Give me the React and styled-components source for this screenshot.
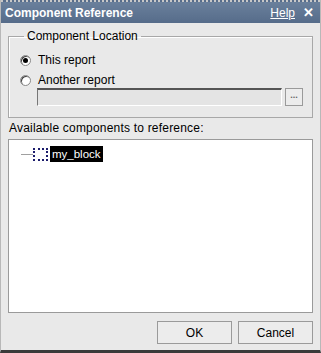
import * as React from 'react';
import styled, { createGlobalStyle } from 'styled-components';

const Global = createGlobalStyle`
    html, body {
        margin: 0;
        padding: 0;
        background: #e9e9e9;
    }
    body {
        font-family: "Liberation Sans", Arial, sans-serif;
        font-size: 12px;
        color: #000;
    }
`;

export default function App() {
    return (
        <Window>
            <Global />
            <TitleBar>
                <Title>Component Reference</Title>
                <HelpLink>Help</HelpLink>
                <Close>✕</Close>
            </TitleBar>
            <Body>
                <Group>
                    <Legend>Component Location</Legend>
                    <RadioRow>
                        <Radio checked />
                        <span>This report</span>
                    </RadioRow>
                    <RadioRow>
                        <Radio />
                        <span>Another report</span>
                    </RadioRow>
                    <PathRow>
                        <PathInput />
                        <BrowseButton>...</BrowseButton>
                    </PathRow>
                </Group>
                <ListLabel>Available components to reference:</ListLabel>
                <Tree>
                    <TreeItem>
                        <Branch />
                        <FocusBox />
                        <Selected>my_block</Selected>
                    </TreeItem>
                </Tree>
                <Footer>
                    <Button>OK</Button>
                    <Button>Cancel</Button>
                </Footer>
            </Body>
        </Window>
    );
}

const Window = styled.div`
    width: 321px;
    height: 353px;
    box-sizing: border-box;
    display: flex;
    flex-direction: column;
    background: #e9e9e9;
    border-left: 1px solid #b8b8b8;
    border-right: 1px solid #b8b8b8;
    border-bottom: 3px solid #3a3a3a;
    overflow: hidden;
`;

const TitleBar = styled.div`
    height: 21px;
    display: flex;
    align-items: center;
    padding: 0 6px 0 4px;
    border-top: 2px dotted #c8c8c8;
    background: linear-gradient(#6a809c, #566c8a);
    color: #fff;
`;

const Title = styled.div`
    flex: 1;
    font-weight: bold;
    font-size: 12px;
`;

const HelpLink = styled.span`
    text-decoration: underline;
    font-size: 12px;
    margin-right: 8px;
`;

const Close = styled.span`
    font-size: 13px;
    font-weight: bold;
`;

const Body = styled.div`
    flex: 1;
    display: flex;
    flex-direction: column;
    padding: 6px 7px 6px 7px;
`;

const Group = styled.fieldset`
    margin: 0;
    padding: 10px 9px 11px 11px;
    border: 1px solid #a8a8a8;
    box-shadow: inset 1px 1px 0 #fff;
    display: flex;
    flex-direction: column;
    gap: 6px;
`;

const Legend = styled.legend`
    padding: 0 3px;
    margin-left: 4px;
    font-size: 12px;
`;

const RadioRow = styled.label`
    display: flex;
    align-items: center;
    gap: 7px;
    height: 14px;
`;

const Radio = styled.span`
    width: 9px;
    height: 9px;
    border-radius: 50%;
    background: #fff;
    border: 1px solid #888;
    box-shadow: inset 1px 1px 0 #444;
    position: relative;
    &::after {
        content: '';
        display: ${(p) => (p.checked ? 'block' : 'none')};
        position: absolute;
        left: 2px;
        top: 2px;
        width: 5px;
        height: 5px;
        border-radius: 50%;
        background: #000;
    }
`;

const PathRow = styled.div`
    display: flex;
    align-items: center;
    gap: 3px;
    margin: -5px 0 0 17px;
`;

const PathInput = styled.div`
    flex: 1;
    height: 15px;
    background: #e4e4e4;
    border-top: 2px solid #555;
    border-left: 1px solid #777;
    border-right: 1px solid #fff;
    border-bottom: 1px solid #fff;
`;

const BrowseButton = styled.div`
    width: 16px;
    height: 16px;
    border: 1px solid #9a9a9a;
    background: #ececec;
    color: #666;
    font-size: 9px;
    line-height: 12px;
    text-align: center;
    font-weight: bold;
`;

const ListLabel = styled.div`
    margin: 3px 0 4px 1px;
    letter-spacing: 0.2px;
`;

const Tree = styled.div`
    box-sizing: border-box;
    height: 174px;
    background: #fff;
    border: 1px solid #9a9a9a;
    padding: 6px 0 0 12px;
`;

const TreeItem = styled.div`
    display: flex;
    align-items: center;
    height: 16px;
`;

const Branch = styled.span`
    width: 12px;
    border-top: 1px solid #a0a0a0;
`;

const FocusBox = styled.span`
    width: 11px;
    height: 9px;
    border: 2px dotted #1c1c6c;
    margin-right: 2px;
`;

const Selected = styled.span`
    background: #000;
    color: #fff;
    padding: 2px 2px;
    font-size: 11.5px;
`;

const Footer = styled.div`
    margin-top: auto;
    display: flex;
    justify-content: flex-end;
    gap: 6px;
`;

const Button = styled.div`
    width: 73px;
    height: 21px;
    display: flex;
    align-items: center;
    justify-content: center;
    border: 1px solid #9a9a9a;
    background: #ececec;
    font-size: 12px;
`;
